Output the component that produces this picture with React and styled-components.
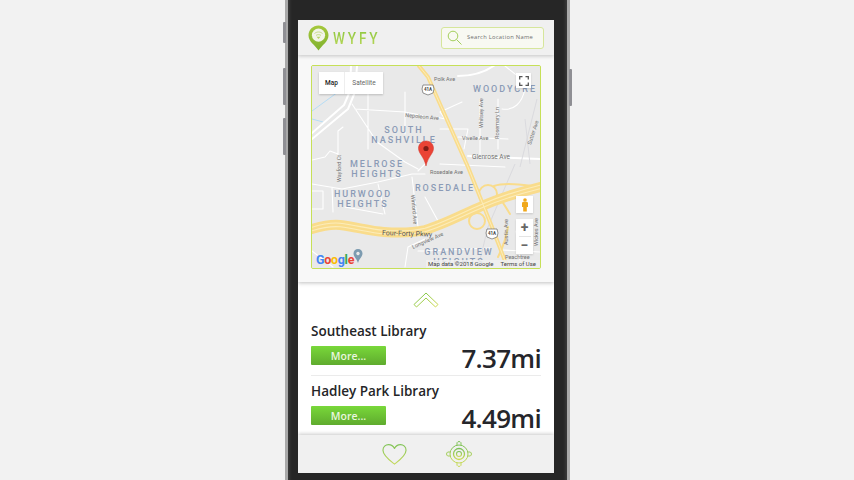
import React from "react";
import styled, { createGlobalStyle } from "styled-components";

const Global = createGlobalStyle`
  html, body { margin: 0; padding: 0; background: #f2f2f2; overflow: hidden; }
  * { box-sizing: border-box; }
`;
const Stage = styled.div`
  width: 854px; height: 480px; display: flex; overflow: hidden; background: #f2f2f2;
  padding-left: 285px;
`;
const Phone = styled.div`
  position: relative; width: 285px; height: 480px; background: #262626;
  border-left: 3px solid #a9a9a9; border-right: 3px solid #a9a9a9;
  padding: 20px 13px 7px 10px;
  box-shadow: inset 4px 0 3px -2px #3a3a3a, inset -4px 0 3px -2px #3a3a3a;
`;
const SideKey = styled.div`
  position: absolute; top: ${p => p.$top}px; height: ${p => p.$h}px; width: 3px;
  background: #8f8f94; border-radius: 1px;
  ${p => p.$right ? "right: -5px;" : "left: -5px;"}
`;
const Screen = styled.div`
  width: 256px; height: 453px; display: flex; flex-direction: column; background: #fff; overflow: hidden;
`;
const Header = styled.header`
  height: 35px; flex: none; display: flex; align-items: center; justify-content: space-between;
  padding: 0 10px 0 10px; background: #f0f0f0; position: relative; z-index: 2;
  box-shadow: 0 1px 4px rgba(0,0,0,.22);
`;
const Logo = styled.div`display: flex; align-items: center; gap: 4px;`;
const LogoText = styled.span`
  display: block; font: 500 17px/18px "Roboto", sans-serif; letter-spacing: 3.5px; white-space: nowrap;
  transform: scaleX(.8); transform-origin: left center;
  background: linear-gradient(#8cc63f, #b9d85a); -webkit-background-clip: text; background-clip: text; color: transparent;
`;
const Search = styled.div`
  width: 103px; height: 22px; border: 1px solid #d6e69b; border-radius: 3px; background: #f8f9f2;
  display: flex; align-items: center; gap: 5px; padding-left: 5px;
`;
const SearchText = styled.span`
  font: 400 5.8px/1 "Open Sans", sans-serif; letter-spacing: .27px; color: #6f6f6f; white-space: nowrap;
`;
const MapPanel = styled.section`
  height: 227px; flex: none; padding: 10px 13px 12px 13px; background: #f8f8f8; position: relative; z-index: 1;
  box-shadow: 0 1px 4px rgba(0,0,0,.25);
`;
const MapFrame = styled.div`
  position: relative; width: 230px; height: 204px; border: 1px solid #c6e057; border-radius: 2px;
  overflow: hidden; background: #e9e9e9;
`;
const MapTabs = styled.div`
  position: absolute; left: 7px; top: 6px; height: 22px; display: flex; background: #fff;
  box-shadow: 0 1px 2px rgba(0,0,0,.2);
`;
const MapTab = styled.span`
  width: ${p => p.$w}px; display: flex; align-items: center; justify-content: center;
  font: ${p => p.$active ? 500 : 400} 6.5px "Roboto", sans-serif; color: ${p => p.$active ? "#222" : "#666"};
  border-right: ${p => p.$active ? "1px solid #eee" : "0"};
`;
const MapButton = styled.div`
  position: absolute; right: ${p => p.$right}px; top: ${p => p.$top}px; width: ${p => p.$w}px; height: ${p => p.$h}px; background: #fff;
  display: flex; flex-direction: column; align-items: center; justify-content: center;
  box-shadow: 0 1px 2px rgba(0,0,0,.15);
`;
const ZoomKey = styled.span`
  font: 700 14px/17px "Roboto", sans-serif; color: #666; height: 17px;
`;
const ZoomRule = styled.i`display: block; width: 12px; height: 1px; background: #e4e4e4;`;
const Attribution = styled.div`
  position: absolute; right: 0; bottom: 0; display: flex; gap: 7px; padding: 0 4px 0 2px; height: 8px;
  font: 400 6px/8px "Roboto", sans-serif; color: #444; background: rgba(240,240,240,.85); white-space: nowrap;
`;
const GoogleMark = styled.div`
  position: absolute; left: 4px; bottom: 2px; font: 700 12.5px/13px "Roboto", sans-serif; letter-spacing: -.3px;
`;
const GL = styled.span`color: ${p => p.$c};`;
const List = styled.section`
  flex: 1; background: #fff; padding: 10px 13px 0 13px; display: flex; flex-direction: column; min-height: 0; overflow: hidden;
`;
const Chevron = styled.div`height: 18px; flex: none; display: flex; justify-content: center; margin-bottom: 12px;`;
const Row = styled.article`
  flex: none; height: 54px; border-bottom: ${p => p.$last ? "0" : "1px solid #ebebeb"}; margin-bottom: ${p => p.$last ? "0" : "6px"};
  display: flex; flex-direction: column;
`;
const Place = styled.h3`
  margin: 0; font: 600 13.5px/18px "Open Sans", sans-serif; color: #252527;
`;
const RowBottom = styled.div`display: flex; align-items: flex-start; justify-content: space-between; margin-top: 6px;`;
const More = styled.button`
  width: 75px; height: 19px; border: 0; border-radius: 1px; padding: 0; color: #e9f7df;
  background: linear-gradient(#79d83a, #5fab2e); font: 600 10.5px/20px "Open Sans", sans-serif;
`;
const Distance = styled.div`
  font: 600 26px/26px "Open Sans", sans-serif; color: #25262b; letter-spacing: -.7px; margin-top: -1px;
`;
const Footer = styled.footer`
  height: 38px; flex: none; background: #f0f0f0; position: relative; display: flex; align-items: center;
  gap: 39px; padding-left: 84px; box-shadow: 0 -1px 4px rgba(0,0,0,.22);
`;

const Pin = () => (
  <svg width="21" height="26" viewBox="0 0 21 26">
    <defs><linearGradient id="pg" x1="0" y1="0" x2="0" y2="1"><stop offset="0" stopColor="#a5c83c" /><stop offset="1" stopColor="#7fb12e" /></linearGradient></defs>
    <path d="M10.5 0.5C4.9.5.5 4.9.5 10.3c0 3.2 1.6 5.7 3.6 7.9 2.6 2.6 4.8 4.7 6.4 7.3 1.6-2.6 3.8-4.7 6.4-7.3 2-2.2 3.6-4.7 3.6-7.9C20.5 4.9 16.1.5 10.5.5z" fill="url(#pg)" />
    <circle cx="10.5" cy="10.2" r="6.6" fill="#f2f4e8" />
    <path d="M6.5 8.5c2.4-2 5.6-2 8 0M8 10.4c1.500-1 3.500-1 5 0" fill="none" stroke="#b7d36a" strokeWidth=".8" />
    <path d="M10.500 14l-2-2.300h4z" fill="#b7d36a" />
  </svg>
);
const Magnifier = () => (
  <svg width="15" height="15" viewBox="0 0 15 15" fill="none" stroke="#a4cf5c" strokeWidth="1">
    <circle cx="6" cy="6" r="4.800" /><path d="M9.500 9.500l5 5" />
  </svg>
);
const road = { fill: "none", stroke: "#fff", strokeLinecap: "round", strokeLinejoin: "round" };
const label = { fontFamily: "Roboto, sans-serif", fontWeight: 500, fontSize: 9, letterSpacing: 2, fill: "#8b9bb6", textAnchor: "middle" };
const small = { fontFamily: "Roboto, sans-serif", fontSize: 5.500, fill: "#6f6f6f" };
const FORTY = "M312 230C322 227 330 225 340 226C356 228 370 232 384 233C398 234 412 234 425 231C445 225 465 214 482 207C500 199 520 193 540 188";
const MAIN = "M419 67L428 78L468 168L492 228L505 262L509 269";

const MapArt = () => (
  <svg width="228" height="202" viewBox="312 67 228 202" style={{ display: "block" }}>
    <rect x="312" y="67" width="228" height="202" fill="#e9e9e9" />
    <path d="M312 112L338 93L346 75M312 120L323 123" fill="none" stroke="#b5dcf5" strokeWidth="1" />
    <path d="M312 140L348 110L355 93L357 67M312 134L344 106L350 92L351 67" {...road} strokeWidth="2" />
    <path d="M458 77C470 77 484 74 495 66M468 157L540 160" {...road} strokeWidth="2" />
    <path d="M352 105L377 143L405 163L418 170M355 110L405 113L425 117M368 95V150M405 93V135M338 160V132L343 128M312 161L325 158L330 152L338 155M312 185L342 190L378 183L412 175L425 175M332 188L333 213M378 185L385 215M345 208L383 215M312 192H323V210H312M412 178L418 228M312 252L333 268M405 268L408 248L425 240M425 198L438 222M458 138L508 140M480 100V158M498 100V150M502 110C514 112 522 104 525 90M505 67L525 83M436 118L445 120L440 113L462 103M440 165L505 168M418 172L425 165M440 130L468 130L464 150M502 251L540 253M418 252L425 252L490 249M516 232L521 269" {...road} strokeWidth="1.100" />
    <path d="M515 165L488 228L478 269M525 120L530 165M537 100L520 168" fill="none" stroke="#d8d8dd" strokeWidth=".9" />
    <g fill="none" stroke="#f9dc8c" strokeLinecap="round" strokeLinejoin="round">
      <circle cx="488" cy="195" r="9" strokeWidth="2" />
      <circle cx="477" cy="222" r="8" strokeWidth="2" />
      <path d="M494 187C505 183 525 186 540 188M508 228C506 240 502 250 498 258M500 199L510 215" strokeWidth="2" />
      <path d={MAIN} strokeWidth="4" />
      <path d={FORTY} strokeWidth="10" />
    </g>
    <path d={FORTY} fill="none" stroke="#fcecb9" strokeWidth="1.100" transform="translate(0 -1.800)" />
    <path d={FORTY} fill="none" stroke="#fcecb9" strokeWidth="1.100" transform="translate(0 1.800)" />
    <path d={MAIN} fill="none" stroke="#fcecb9" strokeWidth="1" />
    <g {...label}>
      <text x="404" y="134">SOUTH</text><text x="404" y="144">NASHVILLE</text>
      <text x="377" y="168">MELROSE</text><text x="377" y="178">HEIGHTS</text>
      <text x="363" y="198">HURWOOD</text><text x="363" y="208">HEIGHTS</text>
      <text x="445" y="192">ROSEDALE</text><text x="505" y="92.500">WOODYCRE</text>
      <text x="459" y="256">GRANDVIEW</text><text x="459" y="266">HEIGHTS</text>
    </g>
    <g {...small}>
      <text x="434" y="82">Polk Ave</text>
      <text x="405" y="118" transform="rotate(5 405 118)">Nepoleon Ave</text>
      <text x="462" y="141">Vivelle Ave</text>
      <text x="472" y="160" fontSize="6.500">Glenrose Ave</text>
      <text x="430" y="175">Rosedale Ave</text>
      <text x="382" y="236" fontSize="7" fill="#555" transform="rotate(2 382 236)">Four-Forty Pkwy</text>
      <text x="413" y="250" transform="rotate(-24 413 250)">Longview Ave</text>
      <text x="505" y="259.500">Peachtree</text>
      <text transform="translate(483 129) rotate(-90)">Whitsey Ave</text>
      <text transform="translate(499 140) rotate(-90)">Rosemary Ln</text>
      <text transform="translate(531 146) rotate(-72)">Sutter Ave</text>
      <text transform="translate(341 183) rotate(-90)">Wayford Ct</text>
      <text transform="translate(411 196) rotate(85)">Winford Ave</text>
      <text transform="translate(508 246) rotate(-90)">Austin Ave</text>
      <text transform="translate(538 247) rotate(-90)">Wickes Ave</text>
    </g>
    <path d="M423 86h10l1 4-1 4-5 2-5-2-1-4z" fill="#fff" stroke="#666" strokeWidth=".7" />
    <text x="428" y="92" fontFamily="Roboto, sans-serif" fontSize="4.500" fontWeight="700" fill="#444" textAnchor="middle">41A</text>
    <path d="M487 230h10l1 4-1 4-5 2-5-2-1-4z" fill="#fff" stroke="#666" strokeWidth=".7" />
    <text x="492" y="236" fontFamily="Roboto, sans-serif" fontSize="4.500" fontWeight="700" fill="#444" textAnchor="middle">41A</text>
    <path d="M426 142c-4.500 0-7.500 3.300-7.500 7.300 0 5.500 5.500 8 7.500 17.700 2-9.700 7.500-12.200 7.500-17.700 0-4-3-7.300-7.500-7.300z" fill="#ea4335" stroke="#d0352a" strokeWidth=".5" />
    <circle cx="426" cy="149.500" r="2.600" fill="#7f1d16" />
    <path d="M358 250c-2.600 0-4.500 2-4.500 4.400 0 3.300 3 4.800 4.500 9.600 1.500-4.800 4.500-6.300 4.500-9.600 0-2.400-1.900-4.400-4.500-4.400z" fill="#7c9bb0" />
    <circle cx="358" cy="254.500" r="1.700" fill="#e8e8e8" />
  </svg>
);

const ChevronIcon = () => (
  <svg width="26" height="18" viewBox="0 0 26 18" fill="none">
    <defs><linearGradient id="cg" x1="0" y1="0" x2="1" y2="1"><stop offset="0" stopColor="#6cc04a" /><stop offset="1" stopColor="#d5dc50" /></linearGradient></defs>
    <path d="M13 1L25 12.500 22.500 15 13 6 3.500 15 1 12.500z" stroke="url(#cg)" strokeWidth="1" strokeLinejoin="round" />
  </svg>
);
const Heart = () => (
  <svg width="25" height="23" viewBox="0 0 26 23" fill="none">
    <defs><linearGradient id="hg" x1="0" y1="0" x2="0" y2="1"><stop offset="0" stopColor="#82c45a" /><stop offset="1" stopColor="#c5d95a" /></linearGradient></defs>
    <path d="M13 21.500C8 17.500 1 12.500 1 7 1 3.500 3.700 1.200 6.800 1.200c2.800 0 5 1.600 6.200 4 1.200-2.400 3.400-4 6.200-4C22.300 1.200 25 3.500 25 7c0 5.500-7 10.500-12 14.500z" stroke="url(#hg)" strokeWidth="1.200" strokeLinejoin="round" />
  </svg>
);
const Target = () => (
  <svg width="26" height="26" viewBox="0 0 26 26" fill="none">
    <defs><linearGradient id="tg" x1="0" y1="0" x2="0" y2="1"><stop offset="0" stopColor="#7cc157" /><stop offset="1" stopColor="#c9da58" /></linearGradient></defs>
    <g stroke="url(#tg)" strokeLinejoin="round">
      <circle cx="13" cy="13" r="9" strokeWidth="1" />
      <circle cx="13" cy="13" r="5.500" strokeWidth="1.300" />
      <circle cx="13" cy="13" r="2.500" strokeWidth="1.100" />
      <path d="M11 4.200V1.700L12 .7h2l1 1v2.500M11 21.800v2.500l1 1h2l1-1v-2.500M4.200 11H1.700l-1 1v2l1 1h2.500M21.800 11h2.500l1 1v2l-1 1h-2.500" strokeWidth="1" />
    </g>
  </svg>
);

const places = [
  { name: "Southeast Library", dist: "7.37mi" },
  { name: "Hadley Park Library", dist: "4.49mi", last: true },
];

export default function App() {
  return (
    <Stage>
      <Global />
      <Phone>
        <SideKey $top={22} $h={21} />
        <SideKey $top={68} $h={37} />
        <SideKey $top={118} $h={37} />
        <SideKey $right $top={69} $h={37} />
        <Screen>
          <Header>
            <Logo><Pin /><LogoText>WYFY</LogoText></Logo>
            <Search><Magnifier /><SearchText>Search Location Name</SearchText></Search>
          </Header>
          <MapPanel>
            <MapFrame>
              <MapArt />
              <MapTabs>
                <MapTab $w={26} $active>Map</MapTab>
                <MapTab $w={38}>Satellite</MapTab>
              </MapTabs>
              <MapButton $right={9} $w={15} $top={7} $h={15}>
                <svg width="10" height="10" viewBox="0 0 10 10" fill="none" stroke="#555" strokeWidth="1.300"><path d="M.7 3.500V.7h2.800M6.500.7h2.800v2.800M9.300 6.500v2.800H6.500M3.500 9.300H.7V6.500" /></svg>
              </MapButton>
              <MapButton $right={7} $w={17} $top={130} $h={17}>
                <svg width="8" height="14" viewBox="0 0 8 14" fill="#f0a81c"><circle cx="4" cy="2" r="1.800" /><path d="M1 5c0-1 1-1.300 3-1.300S7 4 7 5v4H5.800v4.500H2.200V9H1z" /></svg>
              </MapButton>
              <MapButton $right={7} $w={17} $top={153} $h={35}>
                <ZoomKey>+</ZoomKey><ZoomRule /><ZoomKey>−</ZoomKey>
              </MapButton>
              <GoogleMark><GL $c="#4285f4">G</GL><GL $c="#ea4335">o</GL><GL $c="#fbbc05">o</GL><GL $c="#4285f4">g</GL><GL $c="#34a853">l</GL><GL $c="#ea4335">e</GL></GoogleMark>
              <Attribution><span>Map data ©2018 Google</span><span>Terms of Use</span></Attribution>
            </MapFrame>
          </MapPanel>
          <List>
            <Chevron><ChevronIcon /></Chevron>
            {places.map(p => (
              <Row key={p.name} $last={p.last}>
                <Place>{p.name}</Place>
                <RowBottom>
                  <More>More...</More>
                  <Distance>{p.dist}</Distance>
                </RowBottom>
              </Row>
            ))}
          </List>
          <Footer><Heart /><Target /></Footer>
        </Screen>
      </Phone>
    </Stage>
  );
}
